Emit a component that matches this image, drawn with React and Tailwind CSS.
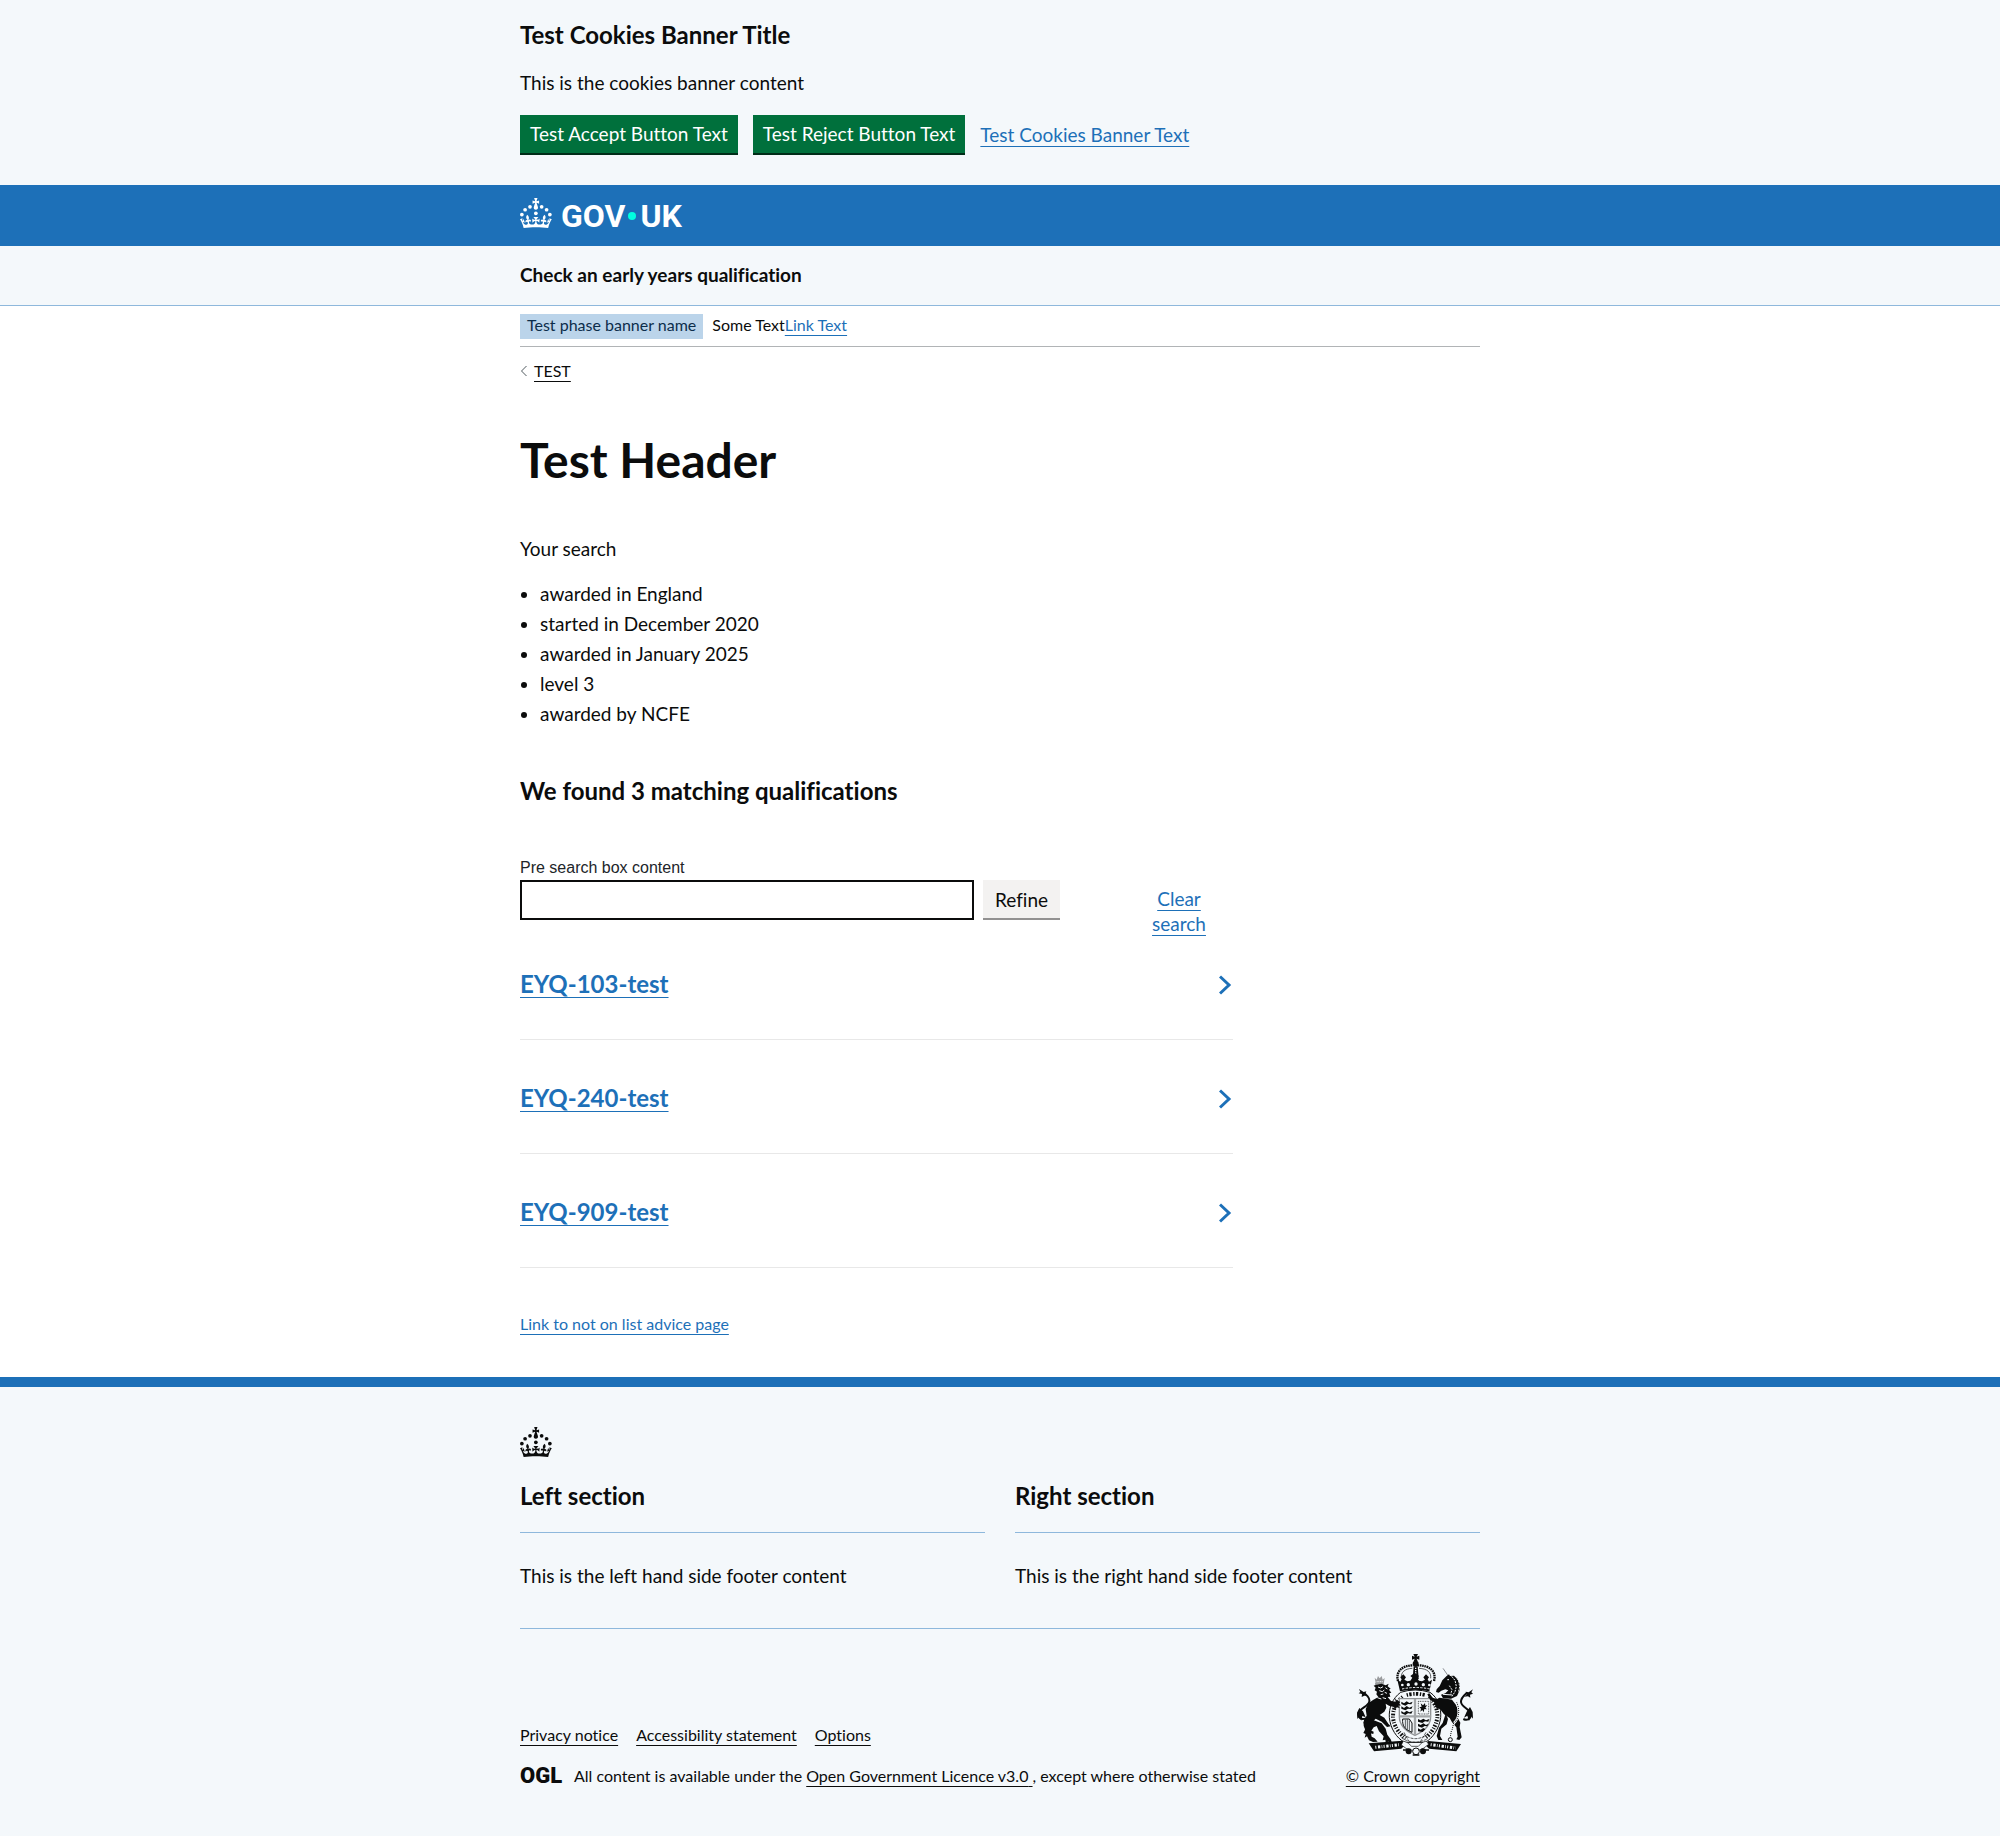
const wrap = "mx-auto w-full max-w-[960px]";
const link =
  "text-[#1d70b8] underline decoration-1 underline-offset-[4px]";
const darkLink =
  "text-[#0b0c0c] underline decoration-1 underline-offset-[4px]";

const criteria = [
  "awarded in England",
  "started in December 2020",
  "awarded in January 2025",
  "level 3",
  "awarded by NCFE",
];

const results = ["EYQ-103-test", "EYQ-240-test", "EYQ-909-test"];

function Crown() {
  return (
    <svg
      className="h-[30px] w-8 shrink-0"
      viewBox="0 0 64 60"
      fill="currentColor"
      aria-hidden="true"
    >
      <circle cx="20" cy="17.6" r="3.7" />
      <circle cx="10.2" cy="23.5" r="3.7" />
      <circle cx="3.7" cy="33.2" r="3.7" />
      <circle cx="31.7" cy="30.6" r="3.7" />
      <circle cx="43.3" cy="17.6" r="3.7" />
      <circle cx="53.2" cy="23.5" r="3.7" />
      <circle cx="59.7" cy="33.2" r="3.7" />
      <path d="M33.1,9.8c.2-.1.3-.3.5-.5l4.6,2.4v-6.8l-4.6,1.5c-.1-.2-.3-.3-.5-.5l1.9-5.9h-6.7l1.9,5.9c-.2.1-.3.3-.5.5l-4.6-1.5v6.8l4.6-2.4c.1.2.3.3.5.5l-2.6,8c-.9,2.8,1.2,5.7,4.1,5.7h0c3,0,5.1-2.9,4.1-5.7l-2.6-8ZM37,37.9s-3.4,3.8-4.1,6.1c2.2,0,4.2-.5,6.4-2.8l-.7,8.5c-2-2.8-4.4-4.1-5.7-3.8.1,3.1.5,6.7,5.8,7.2,3.7.3,6.7-1.5,7-3.8.4-2.6-2-4.3-3.7-1.6-1.4-4.5,2.4-6.1,4.9-3.2-1.9-4.5-1.8-7.7,2.4-10.9,3,4,2.6,7.3-1.2,11.1,2.4-1.3,6.2,0,4,4.6-1.2-2.8-3.7-2.2-4.2.2-.3,1.7.7,3.7,3,4.2,1.9.3,4.7-.9,7-5.9-1.3,0-2.4.7-3.9,1.7l2.4-8c.6,2.3,1.4,3.7,2.2,4.5.6-1.6.5-2.8,0-5.3l5,1.8c-2.6,3.6-5.2,8.7-7.3,17.5-7.4-1.1-15.7-1.7-24.5-1.7h0c-8.8,0-17.1.6-24.5,1.7-2.1-8.9-4.7-13.9-7.3-17.5l5-1.8c-.5,2.5-.6,3.7,0,5.3.8-.8,1.6-2.3,2.2-4.5l2.4,8c-1.5-1-2.6-1.7-3.9-1.7,2.3,5,5.2,6.2,7,5.9,2.3-.4,3.3-2.4,3-4.2-.5-2.4-3-3.1-4.2-.2-2.2-4.6,1.6-6,4-4.6-3.7-3.7-4.2-7.1-1.2-11.1,4.2,3.2,4.3,6.4,2.4,10.9,2.5-2.8,6.3-1.3,4.9,3.2-1.8-2.7-4.1-1-3.7,1.6.3,2.3,3.3,4.1,7,3.8,5.4-.5,5.7-4.2,5.8-7.2-1.3-.2-3.7,1-5.7,3.8l-.7-8.5c2.2,2.3,4.2,2.7,6.4,2.8-.7-2.3-4.1-6.1-4.1-6.1h10.6Z" />
    </svg>
  );
}

function CoatOfArms() {
  return (
    <svg
      className="h-[102px] w-[117px]"
      viewBox="51 45 351 306"
      fill="#0b0c0c"
      aria-hidden="true"
    >
      {/* orb and cross */}
      <path d="M220 45h14l-4 8 8-3v12l-8-3 3 8h-12l3-8-8 3V50l8 3Z" />
      <circle cx="227" cy="74" r="9" />
      <path d="M221 82h12l3 36-9 12-9-12Z" />
      <path d="M227 86v30" stroke="#f4f8fb" strokeWidth="4" strokeDasharray="4 3" />
      {/* arches */}
      <path
        d="M174 126c-8-28 12-47 46-47M282 126c8-28-12-47-48-47"
        fill="none"
        stroke="#0b0c0c"
        strokeWidth="7"
        strokeDasharray="5 2"
      />
      <path
        d="M184 118c-2-18 10-29 33-30M272 118c2-18-10-29-35-30"
        fill="none"
        stroke="#0b0c0c"
        strokeWidth="2"
      />
      {/* fleurs and band */}
      <path d="m172 122 9 6 4-7-4-6 9-9 8 9-5 7 9 5 9-2 6-9-6-5 13-10 13 10-6 5 6 9 9 2 9-5-5-7 8-9 9 9-4 6 4 7 9-6-8 35q-43-9-88 0Z" />
      <g fill="#f4f8fb">
        <circle cx="187" cy="138" r="4" />
        <circle cx="205" cy="137" r="5" />
        <circle cx="228" cy="135" r="5" />
        <circle cx="250" cy="137" r="5" />
        <circle cx="268" cy="138" r="4" />
      </g>
      <path d="M186 150q42-9 84 0" fill="none" stroke="#f4f8fb" strokeWidth="3" strokeDasharray="7 4" />
      {/* garter */}
      <path
        d="M182 160q43-14 88 0c26 18 34 48 32 76-4 32-24 62-46 74h-62c-24-12-43-42-46-74-2-28 9-58 34-76Z"
        fill="#f4f8fb"
        stroke="#0b0c0c"
        strokeWidth="3"
      />
      <path
        d="M188 174q-30 24-29 62 5 38 38 62M266 174q28 24 26 62-6 38-38 62"
        fill="none"
        stroke="#0b0c0c"
        strokeWidth="12"
        strokeDasharray="3 5 5 4"
      />
      <path d="M200 168q26-7 54 0" fill="none" stroke="#0b0c0c" strokeWidth="11" strokeDasharray="4 4 7 5" />
      {/* quartered shield */}
      <path
        d="M178 179h94v54c0 28-21 44-47 56-26-12-47-28-47-56Z"
        fill="#f4f8fb"
        stroke="#8f9294"
        strokeWidth="4"
      />
      <path d="M225 180v108M179 232h93" stroke="#a3a6a8" strokeWidth="7" />
      <path d="m184 188 8 5 8-6 8 5 10-4-4 8-10-1-8 5-12-5Zm0 14 8 5 8-6 8 5 10-4-4 8-10-1-8 5-12-5Zm0 14 8 5 8-6 8 5 10-4-4 8-10-1-8 5-12-5Z" />
      <path d="M235 187h31v38h-31Z" fill="none" stroke="#0b0c0c" strokeWidth="2" strokeDasharray="3 2" />
      <path d="m242 193 7 6 6-7 1 8 6-2-6 8 5 5-8-1-2 10-4-7-6 5 2-9-5-4 7-2Z" />
      <path
        d="M188 240c-2 22 8 32 28 40v-28l-8-12Z"
        fill="none"
        stroke="#0b0c0c"
        strokeWidth="3"
      />
      <path d="M196 242v28M202 240v36M208 244v34" stroke="#55585a" strokeWidth="3" />
      <path d="m234 240 8 4 8-5 8 5 10-4-3 8-10-1-8 5-13-4Zm0 14 8 4 8-5 8 5 8-4-4 8-8-1-8 5-12-4Zm0 14 8 4 8-5 6 4-8 8-14-2Z" />
      <path
        d="M190 286q36 26 72 0M184 296q40 26 80 2M192 280l14 26M258 280l-18 30"
        fill="none"
        stroke="#0b0c0c"
        strokeWidth="2"
        strokeDasharray="9 3"
      />
      {/* lion */}
      <path d="m104 116 6 6 4-11 5 7 6-7 3 11 6-5-3 19h-23Z" fill="#9a9c9e" />
      <path d="M110 128h18" stroke="#f4f8fb" strokeWidth="3" strokeDasharray="3 2" />
      <path d="m107 137 18-3 12 5 9-5-3 8 9 7-5 3 7 9-6 2 3 10-8 1 10 12 14 2-2-10 7 8 9 2-4 6 6 5-8 1 4 7-9-2-4 5-5-6-14-4-10-6 2 12-6 12-14 10 14 8 12 18 7 8-11 2-16-16-18-9-14 14-9 3 4 16 13 6-1 7-17-4-12-20 1-18 8-13-3-20 8-17 14-10 16-9-6-8 2-8-7-4 3-8-6-6 8-3-4-7Z" />
      <path d="m78 235-8 15 5 22-5 10 7 3-3 11 7-4 6 12 12 5 14-1-9-10-9-5-3-15 9-13 9-4 7 16 14 15-3 12 8-2 1 8 9-2 11 6-5-13-10-14-5-18-12-16Z" />
      <path d="m114 144 8 3 7-4M118 155l9 3 6-5M122 167l8-2M112 176l12 4M136 146l6 4M134 160l7 3M128 176l10 3" fill="none" stroke="#f4f8fb" strokeWidth="3" />
      <path
        d="M78 238c-20 8-29-10-18-23 9-11 26-15 28-28 2-11-9-20-16-25"
        fill="none"
        stroke="#0b0c0c"
        strokeWidth="6"
      />
      <path d="m57 150 14 9 8-2-3 8 9 6-12-1-8 4 1-9-10-2 5-4ZM58 207l-7 14 1 19 5-7 7 12 3-14 10 4-8-18Z" />
      {/* unicorn */}
      <path d="m309 88 18 26" stroke="#55585a" strokeWidth="2" />
      <path d="m319 112 8-6 3 5 12-1 10 9 8 18-1 17-8 17-18 8-24-1-6-11 13-4 9-9-9-3-12 4-8 6-8-2 2-8 9-10 8-17Z" />
      <path
        d="m335 112 10 12 4 18-4 16-9 14M345 111l11 14 3 19-4 17M328 140l8 12-4 14"
        fill="none"
        stroke="#f4f8fb"
        strokeWidth="3"
        strokeDasharray="6 3"
      />
      <path d="M322 122h5M309 166l28 2" stroke="#f4f8fb" strokeWidth="3" />
      <path d="m281 186 17-10 22 3 16 3 12 16 8 18-4 18 9 17-2 14 6 30-7 8-9-2 4-8-4-28-12-14-8-14-17-11-12-16-10-2-4-8Z" />
      <path d="m284 190-14-8-8-16 6-3 10 13 14 5ZM317 224l7 16-4 16-16 13-4 22 7 12h-12l-5-12 7-25 11-14Z" />
      <path
        d="M350 190c10 22 8 48-8 62M341 252l-5 22M334 276l-7 20"
        fill="none"
        stroke="#f4f8fb"
        strokeWidth="7"
      />
      <path
        d="M350 190c10 22 8 48-8 62M341 252l-5 22M334 276l-3 18"
        fill="none"
        stroke="#0b0c0c"
        strokeWidth="3"
        strokeDasharray="3 3"
      />
      <circle cx="331" cy="302" r="6" fill="#f4f8fb" stroke="#0b0c0c" strokeWidth="3" />
      <path
        d="M370 240c16 8 29-8 19-22-8-11-25-16-26-29-1-11 9-20 17-27"
        fill="none"
        stroke="#0b0c0c"
        strokeWidth="6"
      />
      <path d="m399 151-13 9-9-2 3 9-8 6 12-1 7 4-1-9 9-3-5-4ZM390 204l8 15 1 20-6-7-6 14-5-16-10 6 8-18Z" />
      {/* motto ribbon */}
      <path d="m86 313 102-8 6 14-10 10-82 8Z" />
      <path d="m363 315-98-9-8 13 10 10 82 8Z" />
      <path d="m106 325 73-8M272 317l75 10" stroke="#f4f8fb" strokeWidth="9" strokeDasharray="3 5 7 4 2 4" />
      <path
        d="M190 306q16 4 25 16h20q10-14 24-16l7 10-16 12q-24 14-52 0l-14-10Z"
        fill="#f4f8fb"
        stroke="#0b0c0c"
        strokeWidth="2"
      />
      <circle cx="206" cy="337" r="9" />
      <circle cx="249" cy="337" r="9" />
      <circle cx="228" cy="337" r="10" fill="#f4f8fb" stroke="#0b0c0c" strokeWidth="3" />
      <path d="M189 333h14M252 333h15M218 348h20" stroke="#0b0c0c" strokeWidth="4" />
    </svg>
  );
}

function GreenButton({ children }) {
  return (
    <button
      type="button"
      className="h-[38px] bg-[#00703c] px-[10px] pb-0.5 leading-[19px] text-white shadow-[0_2px_0_#002d18]"
    >
      {children}
    </button>
  );
}

function FooterSection({ title, children }) {
  return (
    <section>
      <h2 className="border-b border-[#8eb8dc] pb-[21px] text-[24px] font-bold leading-[30px]">
        {title}
      </h2>
      <p className="mt-[30px]">{children}</p>
    </section>
  );
}

export default function App() {
  return (
    <div className="bg-white font-[Lato,Arial,sans-serif] text-[19px] leading-[25px] text-[#0b0c0c] [font-variant-ligatures:none]">
      <section aria-label="Cookies" className="bg-[#f4f8fb] pb-8 pt-5">
        <div className={wrap}>
          <h2 className="text-[24px] font-bold leading-[30px]">
            Test Cookies Banner Title
          </h2>
          <p className="mt-5">This is the cookies banner content</p>
          <div className="mt-5 flex items-center gap-[15px]">
            <GreenButton>Test Accept Button Text</GreenButton>
            <GreenButton>Test Reject Button Text</GreenButton>
            <a href="#cookies" className={link}>
              Test Cookies Banner Text
            </a>
          </div>
        </div>
      </section>

      <header>
        <div className="bg-[#1d70b8]">
          <div className={`${wrap} flex h-[61px] items-center`}>
            <a
              href="#home"
              aria-label="GOV.UK"
              className="flex items-center pb-[5px] text-white"
            >
              <Crown />
              <span className="ml-[9px] mt-[6px] flex items-center font-[Roboto,Arial,sans-serif] text-[32px] font-bold leading-[30px]">
                GOV
                <span className="ml-[3px] mr-1 h-2 w-2 shrink-0 rounded-full bg-[#00ffe0]" />
                UK
              </span>
            </a>
          </div>
        </div>
        <div className="border-b border-[#8eb8dc] bg-[#f4f8fb] pb-[18px] pt-4">
          <div className={`${wrap} font-bold`}>
            Check an early years qualification
          </div>
        </div>
      </header>

      <div className={wrap}>
        <div className="flex items-start border-b border-[#b1b4b6] pb-[7px] pt-2 text-[16px] leading-[22px]">
          <strong className="bg-[#bbd4ea] px-[7px] pb-[3px] font-normal text-[#0c2d4a]">
            Test phase banner name
          </strong>
          <span className="ml-[9px]">
            Some Text
            <a href="#feedback" className={link}>
              Link Text
            </a>
          </span>
        </div>

        <a
          href="#back"
          className="mt-[14px] flex w-fit items-center gap-[6px] text-[16px] leading-[20px]"
        >
          <svg
            className="h-3 w-2"
            viewBox="0 0 8 12"
            fill="none"
            stroke="#505a5f"
            aria-hidden="true"
          >
            <path d="M6.500 1 1.500 6l5 5" />
          </svg>
          <span className={darkLink}>TEST</span>
        </a>

        <main className="w-3/4 pb-[43px] pr-[7px]">
          <h1 className="mt-[54px] text-[48px] font-bold leading-[50px]">
            Test Header
          </h1>
          <p className="mt-[51px]">Your search</p>
          <ul className="mt-5 list-disc space-y-[5px] pl-5">
            {criteria.map((item) => (
              <li key={item}>{item}</li>
            ))}
          </ul>
          <h2 className="mt-[50px] text-[24px] font-bold leading-[30px]">
            We found 3 matching qualifications
          </h2>

          <form className="mt-[52px]" onSubmit={(e) => e.preventDefault()}>
            <label
              htmlFor="refine"
              className="block font-['Liberation_Sans',Arial,sans-serif] text-[16px] leading-[20px] text-[#212529]"
            >
              Pre search box content
            </label>
            <div className="mt-[2px] flex items-start">
              <input
                id="refine"
                type="text"
                className="h-10 min-w-0 flex-1 border-2 border-[#0b0c0c] bg-white px-1"
              />
              <button
                type="submit"
                className="ml-[9px] h-[38px] w-[77px] bg-[#f3f2f1] shadow-[0_2px_0_#929191]"
              >
                Refine
              </button>
              <div className="ml-[65px] w-[108px] px-5 pt-[6px] text-center">
                <a href="#clear" className={link}>
                  Clear search
                </a>
              </div>
            </div>
          </form>

          <ul className="mt-[33px] space-y-[43px]">
            {results.map((name) => (
              <li
                key={name}
                className="flex items-center justify-between border-b border-[#e8e8e8] pb-10 text-[24px] font-bold leading-[30px]"
              >
                <a href={`#${name}`} className={link}>
                  {name}
                </a>
                <svg
                  className="mt-0.5 h-5 w-[14px]"
                  viewBox="0 0 14 20"
                  fill="none"
                  stroke="#1d70b8"
                  strokeWidth="3"
                  aria-hidden="true"
                >
                  <path d="m1 1.500 9 8.500-9 8.500" />
                </svg>
              </li>
            ))}
          </ul>

          <p className="mt-[46px] text-[16px] leading-[20px]">
            <a href="#not-on-list" className={link}>
              Link to not on list advice page
            </a>
          </p>
        </main>
      </div>

      <footer className="border-t-[10px] border-[#1d70b8] bg-[#f4f8fb] pb-[50px] pt-10">
        <div className={wrap}>
          <Crown />
          <div className="mt-6 grid grid-cols-2 gap-[30px] border-b border-[#8eb8dc] pb-10">
            <FooterSection title="Left section">
              This is the left hand side footer content
            </FooterSection>
            <FooterSection title="Right section">
              This is the right hand side footer content
            </FooterSection>
          </div>
          <div className="mt-[25px] flex items-end justify-between text-[16px] leading-[20px]">
            <div>
              <ul className="flex gap-[18px]">
                {["Privacy notice", "Accessibility statement", "Options"].map(
                  (item) => (
                    <li key={item}>
                      <a href="#footer" className={darkLink}>
                        {item}
                      </a>
                    </li>
                  )
                )}
              </ul>
              <div className="mt-[21px] flex items-center">
                <span className="w-[54px] font-[Roboto,Arial,sans-serif] text-[22px] font-black">
                  OGL
                </span>
                <span>
                  All content is available under the{" "}
                  <a href="#licence" className={darkLink}>
                    Open Government Licence v3.0{" "}
                  </a>
                  , except where otherwise stated
                </span>
              </div>
            </div>
            <div className="flex flex-col items-end gap-[10px]">
              <div className="pr-[6px]">
                <CoatOfArms />
              </div>
              <a href="#copyright" className={darkLink}>
                © Crown copyright
              </a>
            </div>
          </div>
        </div>
      </footer>
    </div>
  );
}
